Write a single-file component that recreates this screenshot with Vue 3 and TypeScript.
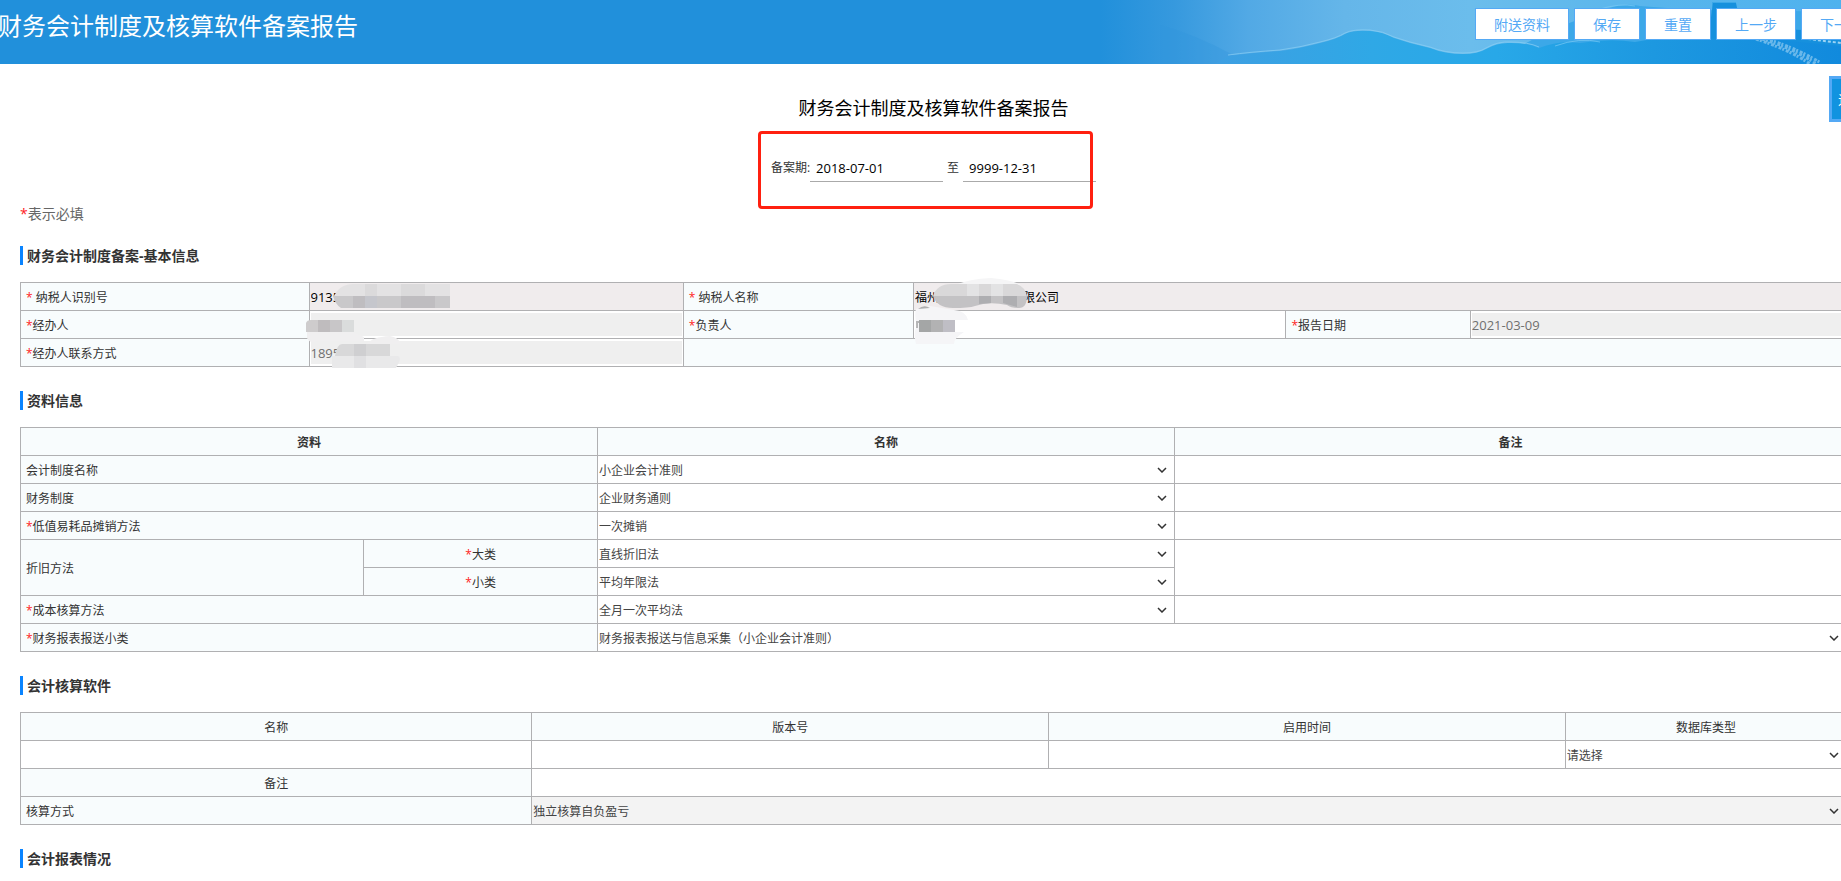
<script setup lang="ts">
import { ref } from 'vue'

interface SelectRow {
  id: string
  label: string
  required: boolean
  value: string
}

const title = '财务会计制度及核算软件备案报告'
const actions = ['附送资料', '保存', '重置', '上一步', '下一步']

const startDate = ref('2018-07-01')
const endDate = ref('9999-12-31')
const taxpayerId = ref('9135')
const taxpayerName = ref('福州\u3000\u3000\u3000\u3000\u3000\u3000\u3000限公司')
const agent = ref('')
const principal = ref('')
const reportDate = ref('2021-03-09')
const phone = ref('1895')

const topRows: SelectRow[] = [
  { id: 'kjzd', label: '会计制度名称', required: false, value: '小企业会计准则' },
  { id: 'cwzd', label: '财务制度', required: false, value: '企业财务通则' },
  { id: 'dzyhp', label: '低值易耗品摊销方法', required: true, value: '一次摊销' },
]
const software = ref(['', '', ''])
const softwareHeads = ['名称', '版本号', '启用时间', '数据库类型']
</script>

<template>
  <div class="page">
    <header class="banner">
      <svg class="scene" viewBox="0 0 741 64" width="741" height="64" aria-hidden="true">
        <defs>
          <linearGradient id="sky" x1="0" x2="1" y1="0" y2="0">
            <stop offset="0" stop-color="#2190db" />
            <stop offset="0.1" stop-color="#3699de" />
            <stop offset="0.2" stop-color="#52a9e5" />
            <stop offset="0.33" stop-color="#65b6e9" />
            <stop offset="0.5" stop-color="#6bbdec" />
            <stop offset="0.75" stop-color="#58b5ec" />
            <stop offset="1" stop-color="#4fb2ee" />
          </linearGradient>
          <linearGradient id="hill" x1="0" x2="1" y1="0" y2="0">
            <stop offset="0" stop-color="#3e9fe2" />
            <stop offset="0.25" stop-color="#2fa8e6" />
            <stop offset="0.45" stop-color="#28a8e8" />
            <stop offset="0.7" stop-color="#1d98e0" />
            <stop offset="1" stop-color="#118add" />
          </linearGradient>
        </defs>
        <rect width="741" height="64" fill="url(#sky)" />
        <path d="M60 25 Q95 34 135 56 L115 64 H60Z" fill="#3294dd" opacity=".35" />
        <path d="M395 64 Q430 35 500 12 Q520 2 540 6 L580 9 L612 10 V2 H636 V10 L741 12 V64Z" fill="#3ca8e8" />
        <path d="M540 64 L560 40 L609 32 L613 3 H636 L641 27 L741 32 V64Z" fill="#1690dd" />
        <path
          d="M115 64 L128 56 Q150 53 180 51 Q202 48 220 43 Q237 39 245 34 Q253 30 270 31 Q283 32 294 38 L310 43 L330 48 Q345 54 363 54 Q378 54 386 49 Q398 42 411 43 Q428 43 439 48 Q459 40 480 43 Q510 38 535 42 Q570 35 600 40 Q650 34 680 40 L741 46 V64Z"
          fill="url(#hill)"
        />
        <path
          d="M128 55 Q150 52 180 50 Q202 47 220 42 Q237 38 245 33 Q253 29 270 30 Q283 31 294 37 L310 42 L330 47 Q345 53 363 53 Q378 53 386 48 Q398 41 411 42 Q428 42 439 47"
          fill="none"
          stroke="#8bd0f3"
          opacity=".7"
        />
        <path d="M500 9 Q520 3 535 6 M455 46 Q480 37 500 42" fill="none" stroke="#7bc9f4" opacity=".7" />
        <path
          d="M656 39 Q690 50 710 64 M662 39 Q695 49 716 64 M670 40 Q700 50 721 63"
          fill="none"
          stroke="#7fc3ee"
          stroke-width="3"
          stroke-dasharray="3 1 2 2"
          opacity=".8"
        />
        <path d="M708 39 L741 43" stroke="#9bd3f5" stroke-width="2" stroke-dasharray="3 2" />
      </svg>
      <h1>{{ title }}</h1>
      <nav class="actions">
        <button v-for="a in actions" :key="a" type="button">{{ a }}</button>
      </nav>
    </header>

    <button class="side-tab" type="button">退出</button>

    <main>
      <h2 class="doc-title">{{ title }}</h2>
      <div class="period-row">
        <div class="period">
          <label for="start">备案期:</label>
          <input id="start" v-model="startDate" class="date" type="text" />
          <label class="to" for="end">至</label>
          <input id="end" v-model="endDate" class="date" type="text" />
          <span class="frame" aria-hidden="true"></span>
        </div>
      </div>
      <p class="note"><i>*</i>表示必填</p>

      <h3>财务会计制度备案-基本信息</h3>
      <table class="basic">
        <colgroup>
          <col class="b1" /><col class="b2" /><col class="b3" /><col class="b4" /><col class="b5" /><col />
        </colgroup>
        <tbody>
          <tr>
            <th scope="row"><label for="nsrsbh"><i>*</i> 纳税人识别号</label></th>
            <td class="tinted">
              <input id="nsrsbh" v-model="taxpayerId" class="dark num" type="text" readonly />
              <svg class="mosaic m-id" viewBox="0 0 117 24" width="117" height="24" aria-hidden="true">
                <path d="M0 14 Q6 0 20 0 H117 V12 H0Z" fill="#e3e2e3" />
                <path d="M32 0h12v12h-12z M68 0h24v12h-24z" fill="#dbdadb" />
                <path d="M0 12 H117 V24 H8 Q2 20 0 12Z" fill="#c9c8ca" />
                <path d="M20 12h12v12h-12z M68 12h34v12h-34z" fill="#bfbdc0" />
                <path d="M32 12h12v12h-12z" fill="#c5c6cc" />
              </svg>
            </td>
            <th scope="row"><label for="nsrmc"><i>*</i> 纳税人名称</label></th>
            <td class="tinted" colspan="3">
              <input id="nsrmc" v-model="taxpayerName" class="dark" type="text" readonly />
              <svg class="mosaic m-name" viewBox="0 0 94 31" width="94" height="31" aria-hidden="true">
                <path d="M22 7 Q36 1 58 0 Q80 2 88 7Z" fill="#f5f5f6" />
                <path d="M0 18 Q4 6 18 6 H84 Q92 9 94 18Z" fill="#d9d8d9" />
                <path d="M34 6h12v12h-12z M58 6h12v12h-12z" fill="#e3e3e4" />
                <path d="M0 18 H94 Q94 30 86 30 Q78 30 74 27 Q56 23 42 28 Q36 30 20 30 Q4 30 0 18Z" fill="#c3c2c4" />
                <path d="M46 18h12v7l-12 1z M70 18h14v11l-14-4z" fill="#aeaeb1" />
              </svg>
            </td>
          </tr>
          <tr>
            <th scope="row"><label for="jbr"><i>*</i>经办人</label></th>
            <td>
              <input id="jbr" v-model="agent" type="text" disabled />
              <svg class="mosaic m-agent" viewBox="0 0 95 24" width="95" height="24" aria-hidden="true">
                <path d="M1 12 H48 L58 17 V21 H10 Q4 24 1 18Z" fill="#f0eff0" />
                <path d="M61 24 Q66 17 84 16 Q92 17 95 24Z" fill="#f0eff0" />
                <path d="M0 3 Q1 0 5 0 H12 V12 H0Z" fill="#cecccd" />
                <path d="M12 0h12v12h-12z" fill="#bfbcbe" />
                <path d="M24 0h12v12h-12z" fill="#c8c6c8" />
                <path d="M36 0h12v12h-12z" fill="#dadcdc" />
              </svg>
            </td>
            <th scope="row"><label for="fzr"><i>*</i>负责人</label></th>
            <td>
              <input id="fzr" v-model="principal" type="text" />
              <svg class="mosaic m-head" viewBox="0 0 54 38" width="54" height="38" aria-hidden="true">
                <path d="M2 3 L16 0 L40 4 Q52 5 54 14 L41 14 V26 L50 26 Q40 32 40 38 H2 Q-1 26 3 20 Q0 10 2 3Z" fill="#f5f5f7" />
                <path d="M4 3 Q10 -2 16 2Z" fill="#aeaeb0" />
                <path d="M5 14h12v12h-12z" fill="#a4a6a6" />
                <path d="M17 14h12v12h-12z" fill="#b2b2b3" />
                <path d="M29 14h12v12h-12z" fill="#bfbec5" />
                <path d="M2 16 H5 M3 17 V22" stroke="#777" fill="none" />
              </svg>
            </td>
            <th scope="row"><label for="bgrq"><i>*</i>报告日期</label></th>
            <td><input id="bgrq" v-model="reportDate" class="num" type="text" disabled /></td>
          </tr>
          <tr>
            <th scope="row"><label for="lxfs"><i>*</i>经办人联系方式</label></th>
            <td>
              <input id="lxfs" v-model="phone" class="num" type="text" disabled />
              <svg class="mosaic m-phone" viewBox="0 0 90 24" width="90" height="24" aria-hidden="true">
                <path d="M3 12 Q5 0 10 0 H58 V12Z" fill="#d8d8d9" />
                <path d="M22 0h12v12h-12z" fill="#cfcfd1" />
                <path d="M0 12 H66 Q70 14 66 20 L64 24 H0Z" fill="#e9e9ea" />
                <path d="M22 12h12v12h-12z" fill="#e0e0e2" />
              </svg>
            </td>
            <th colspan="4"></th>
          </tr>
        </tbody>
      </table>

      <h3>资料信息</h3>
      <table>
        <colgroup>
          <col class="d1" /><col class="d2" /><col class="d3" /><col />
        </colgroup>
        <thead>
          <tr>
            <th class="center strong" scope="col" colspan="2">资料</th>
            <th class="center strong" scope="col">名称</th>
            <th class="center strong" scope="col">备注</th>
          </tr>
        </thead>
        <tbody>
          <tr v-for="r in topRows" :key="r.id">
            <th scope="row" colspan="2"><label :for="r.id"><i v-if="r.required">*</i>{{ r.label }}</label></th>
            <td>
              <select :id="r.id"><option>{{ r.value }}</option></select>
              <svg class="arrow" viewBox="0 0 10 6" width="10" height="6" aria-hidden="true"><path d="M1 1 L5 5 L9 1" /></svg>
            </td>
            <td><input :aria-label="r.label + '备注'" type="text" /></td>
          </tr>
          <tr>
            <th scope="row" rowspan="2">折旧方法</th>
            <th class="center" scope="row"><label for="dl"><i>*</i>大类</label></th>
            <td>
              <select id="dl"><option>直线折旧法</option></select>
              <svg class="arrow" viewBox="0 0 10 6" width="10" height="6" aria-hidden="true"><path d="M1 1 L5 5 L9 1" /></svg>
            </td>
            <td rowspan="2"><input aria-label="折旧方法备注" type="text" /></td>
          </tr>
          <tr>
            <th class="center" scope="row"><label for="xl"><i>*</i>小类</label></th>
            <td>
              <select id="xl"><option>平均年限法</option></select>
              <svg class="arrow" viewBox="0 0 10 6" width="10" height="6" aria-hidden="true"><path d="M1 1 L5 5 L9 1" /></svg>
            </td>
          </tr>
          <tr>
            <th scope="row" colspan="2"><label for="cbhs"><i>*</i>成本核算方法</label></th>
            <td>
              <select id="cbhs"><option>全月一次平均法</option></select>
              <svg class="arrow" viewBox="0 0 10 6" width="10" height="6" aria-hidden="true"><path d="M1 1 L5 5 L9 1" /></svg>
            </td>
            <td><input aria-label="成本核算方法备注" type="text" /></td>
          </tr>
          <tr>
            <th scope="row" colspan="2"><label for="bsxl"><i>*</i>财务报表报送小类</label></th>
            <td colspan="2">
              <select id="bsxl"><option>财务报表报送与信息采集（小企业会计准则）</option></select>
              <svg class="arrow" viewBox="0 0 10 6" width="10" height="6" aria-hidden="true"><path d="M1 1 L5 5 L9 1" /></svg>
            </td>
          </tr>
        </tbody>
      </table>

      <h3>会计核算软件</h3>
      <table>
        <colgroup>
          <col class="s1" /><col class="s2" /><col class="s2" /><col />
        </colgroup>
        <thead>
          <tr>
            <th v-for="h in softwareHeads" :key="h" class="center" scope="col">{{ h }}</th>
          </tr>
        </thead>
        <tbody>
          <tr>
            <td v-for="(_, i) in software" :key="i">
              <input v-model="software[i]" :aria-label="softwareHeads[i]" type="text" />
            </td>
            <td>
              <select aria-label="数据库类型"><option>请选择</option></select>
              <svg class="arrow" viewBox="0 0 10 6" width="10" height="6" aria-hidden="true"><path d="M1 1 L5 5 L9 1" /></svg>
            </td>
          </tr>
          <tr>
            <th class="center" scope="row"><label for="bz">备注</label></th>
            <td colspan="3"><input id="bz" type="text" /></td>
          </tr>
          <tr>
            <th scope="row"><label for="hsfs">核算方式</label></th>
            <td class="muted" colspan="3">
              <select id="hsfs" disabled><option>独立核算自负盈亏</option></select>
              <svg class="arrow" viewBox="0 0 10 6" width="10" height="6" aria-hidden="true"><path d="M1 1 L5 5 L9 1" /></svg>
            </td>
          </tr>
        </tbody>
      </table>

      <h3>会计报表情况</h3>
    </main>
  </div>
</template>

<style>
body {
  margin: 0;
  background: #fff;
}
</style>

<style scoped>
.page {
  position: relative;
  overflow: hidden;
  color: #333;
  font: 12px/20px "Open Sans", "Noto Sans CJK SC", sans-serif;
}
.page * {
  box-sizing: border-box;
}
button,
input,
select {
  font: inherit;
}
i {
  color: #f22;
  font-style: normal;
}
.banner {
  position: relative;
  display: flex;
  justify-content: space-between;
  align-items: flex-start;
  height: 64px;
  background: #2190db;
}
.scene {
  position: absolute;
  top: 0;
  right: 0;
}
h1 {
  margin: 10px 0 0 -2px;
  color: #fff;
  font-size: 24px;
  font-weight: 400;
  line-height: 32px;
  white-space: nowrap;
}
.actions {
  position: relative;
  display: flex;
  gap: 5px;
  margin: 8px -40px 0 0;
}
.actions button {
  flex: none;
  height: 32px;
  padding: 2px 18px 0;
  border: 1px solid #54a9f5;
  background: #fff;
  color: #54a9f5;
  font-size: 14px;
  line-height: 28px;
}
.side-tab {
  position: absolute;
  top: 76px;
  right: -36px;
  width: 48px;
  height: 46px;
  padding: 2px 6px 0;
  border: 3px solid #54a9f5;
  background: #1193e0;
  color: #fff;
  font-size: 14px;
  text-align: left;
}
main {
  margin: 0 -6px 0 20px;
  padding: 31px 0 13px;
}
.doc-title {
  margin: 0;
  color: #000;
  font-size: 18px;
  font-weight: 400;
  line-height: 26px;
  text-align: center;
}
.period-row {
  display: flex;
  justify-content: center;
  margin-top: 33px;
}
.period {
  position: relative;
  display: flex;
  align-items: center;
  height: 28px;
}
.period .to {
  margin: 0 4px;
}
.period .date {
  width: 133px;
  height: 28px;
  padding: 0 6px;
  border: 0;
  border-bottom: 1px solid #aaa;
  background: transparent;
  color: #000;
  font-size: 13px;
}
.frame {
  position: absolute;
  inset: -23px 3px -27px -13px;
  border: 3px solid #ff2010;
  border-radius: 4px;
  pointer-events: none;
}
.note {
  margin: 22px 0;
  color: #666;
  font-size: 14px;
}
h3 {
  margin: 0 0 17px;
  padding-left: 4px;
  border-left: 3px solid #0a84ff;
  font-size: 14px;
  font-weight: 700;
  line-height: 19px;
}
h3:last-child {
  margin-bottom: 0;
}
table {
  width: 100%;
  margin-bottom: 24px;
  border-collapse: collapse;
  table-layout: fixed;
}
th,
td {
  position: relative;
  height: 28px;
  padding: 0;
  border: 1px solid #b0b0b2;
  background: #fff;
}
th {
  padding: 2px 5px 0;
  background: #f8fcfd;
  font-weight: 400;
  text-align: left;
}
.center {
  text-align: center;
}
.strong {
  font-weight: 700;
}
.tinted {
  background: #f0eced;
}
.muted {
  background: #f3f3f3;
}
td input,
td select {
  display: block;
  width: calc(100% - 2px);
  height: 23px;
  margin: 0 1px;
  padding: 1px 0 0;
  border: 0;
  border-radius: 0;
  background: transparent;
  color: #444;
}
td input:disabled {
  background: #efefef;
  color: #707070;
}
td select {
  padding-top: 2px;
  appearance: none;
  opacity: 1;
}
td .num {
  font-size: 13px;
}
td .dark {
  color: #000;
}
.arrow {
  position: absolute;
  top: 11px;
  right: 7px;
  fill: none;
  stroke: #333;
  stroke-width: 1.5;
  pointer-events: none;
}
.mosaic {
  position: absolute;
  z-index: 1;
}
.m-id {
  top: 1px;
  left: 23px;
}
.m-name {
  top: -5px;
  left: 19px;
}
.m-agent {
  top: 9px;
  left: -4px;
}
.m-head {
  top: -5px;
  left: 0;
}
.m-phone {
  top: 5px;
  left: 22px;
}
.b1 { width: 15.8%; }
.b2 { width: 20.5%; }
.b3 { width: 12.6%; }
.b4 { width: 20.4%; }
.b5 { width: 10.1%; }
.d1 { width: 18.8%; }
.d2 { width: 12.8%; }
.d3 { width: 31.6%; }
.s1 { width: 28%; }
.s2 { width: 28.3%; }
</style>
